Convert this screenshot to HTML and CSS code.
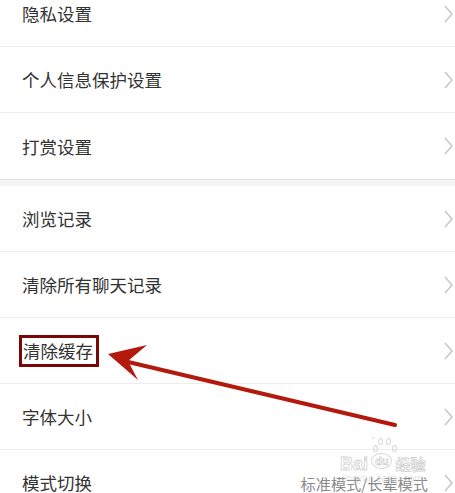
FILE: index.html
```html
<!DOCTYPE html>
<html lang="zh-CN">
<head>
    <meta charset="UTF-8">
    <meta name="viewport" content="width=device-width, initial-scale=1.0">
    <title>设置</title>
    <link rel="stylesheet" href="styles.css">
</head>
<body>
    <div class="page">
        <div class="group first">
            <div class="row"><span class="label">隐私设置</span><svg class="chevron" viewBox="0 0 9 18"><polyline points="1,1 8,9 1,17"/></svg></div>
            <div class="row"><span class="label">个人信息保护设置</span><svg class="chevron" viewBox="0 0 9 18"><polyline points="1,1 8,9 1,17"/></svg></div>
            <div class="row last"><span class="label">打赏设置</span><svg class="chevron" viewBox="0 0 9 18"><polyline points="1,1 8,9 1,17"/></svg></div>
        </div>

        <div class="gap"></div>

        <div class="group">
            <div class="row"><span class="label">浏览记录</span><svg class="chevron" viewBox="0 0 9 18"><polyline points="1,1 8,9 1,17"/></svg></div>
            <div class="row"><span class="label">清除所有聊天记录</span><svg class="chevron" viewBox="0 0 9 18"><polyline points="1,1 8,9 1,17"/></svg></div>
            <div class="row"><span class="label marked">清除缓存</span><svg class="chevron" viewBox="0 0 9 18"><polyline points="1,1 8,9 1,17"/></svg></div>
            <div class="row"><span class="label">字体大小</span><svg class="chevron" viewBox="0 0 9 18"><polyline points="1,1 8,9 1,17"/></svg></div>
            <div class="row">
                <span class="label">模式切换</span>
                <span class="value">标准模式/长辈模式</span>
                <svg class="chevron" viewBox="0 0 9 18"><polyline points="1,1 8,9 1,17"/></svg>
            </div>
        </div>

        <!-- annotation arrow -->
        <svg class="arrow" width="455" height="493" viewBox="0 0 455 493">
            <line x1="124" y1="361" x2="395" y2="425" stroke="#b3190d" stroke-width="4" stroke-linecap="round"/>
            <path d="M108 354 L147 345 L128 361 L138 380 Z" fill="#b3190d"/>
        </svg>

        <div class="watermark">
            <div class="paw">
                <span class="toe t1"></span><span class="toe t2"></span><span class="toe t3"></span><span class="toe t4"></span>
                <span class="pad"></span>
            </div>
            <div class="brand"><span class="bai">Bai</span><span class="du">du</span><span class="jy">经验</span></div>
            <div class="site">jingyan.baidu.com</div>
        </div>
    </div>
</body>
</html>
```

FILE: styles.css
```css
* {
    margin: 0;
    padding: 0;
    box-sizing: border-box;
}

body {
    font-family: "Noto Sans CJK SC", "Noto Sans", sans-serif;
    background: #fff;
    width: 455px;
    height: 493px;
    overflow: hidden;
}

.page {
    position: relative;
    height: 493px;
    overflow: hidden;
}

.group.first {
    margin-top: -19px;
}

.row {
    height: 66px;
    display: flex;
    align-items: center;
    padding-left: 22px;
    border-bottom: 1px solid #ededed;
}

.row.last {
    border-bottom: none;
}

.gap {
    height: 7px;
    background: #f4f4f4;
    border-top: 1px solid #e2e2e2;
}

.label {
    flex: 1;
    font-size: 17.5px;
    color: #333;
}

.label.marked {
    flex: none;
    outline: 3px solid #7b0606;
    padding: 1px 3px 1px 1px;
    line-height: 24px;
    margin-right: auto;
}

.value {
    font-size: 15.2px;
    color: #8a8a8a;
    margin-right: 16px;
}

.chevron {
    width: 9px;
    height: 18px;
    margin-right: 2px;
    fill: none;
    stroke: #c6c6c6;
    stroke-width: 1.5;
}

.arrow {
    position: absolute;
    left: 0;
    top: 0;
    pointer-events: none;
}

.watermark {
    position: absolute;
    left: 340px;
    top: 437px;
    width: 100px;
    color: rgba(180, 180, 180, 0.55);
    pointer-events: none;
}

.paw {
    position: relative;
    width: 26px;
    height: 18px;
    margin-left: 32px;
}

.toe, .pad {
    position: absolute;
    border: 1.5px solid rgba(200, 200, 200, 0.7);
    border-radius: 50%;
}

.t1 { left: 1px; top: 8px; width: 5px; height: 7px; }
.t2 { left: 6px; top: 1px; width: 5px; height: 7px; }
.t3 { left: 14px; top: 1px; width: 5px; height: 7px; }
.t4 { left: 20px; top: 8px; width: 5px; height: 7px; }

.brand {
    display: flex;
    align-items: center;
    font-family: "Liberation Sans", Arial, sans-serif;
    font-size: 18px;
    font-weight: bold;
    line-height: 18px;
    -webkit-text-stroke: 0.8px rgba(195, 195, 195, 0.75);
    color: rgba(255, 255, 255, 0.4);
}

.du {
    font-size: 11px;
    line-height: 12px;
    border: 1.5px solid rgba(200, 200, 200, 0.7);
    border-radius: 50%;
    padding: 1px 3px;
    margin: -6px 3px 0;
}

.jy {
    font-family: "Noto Sans CJK SC", sans-serif;
    font-size: 15px;
}

.site {
    font-family: "Liberation Sans", Arial, sans-serif;
    font-size: 10px;
    line-height: 12px;
    margin-left: 2px;
    color: rgba(200, 200, 200, 0.5);
}
```
